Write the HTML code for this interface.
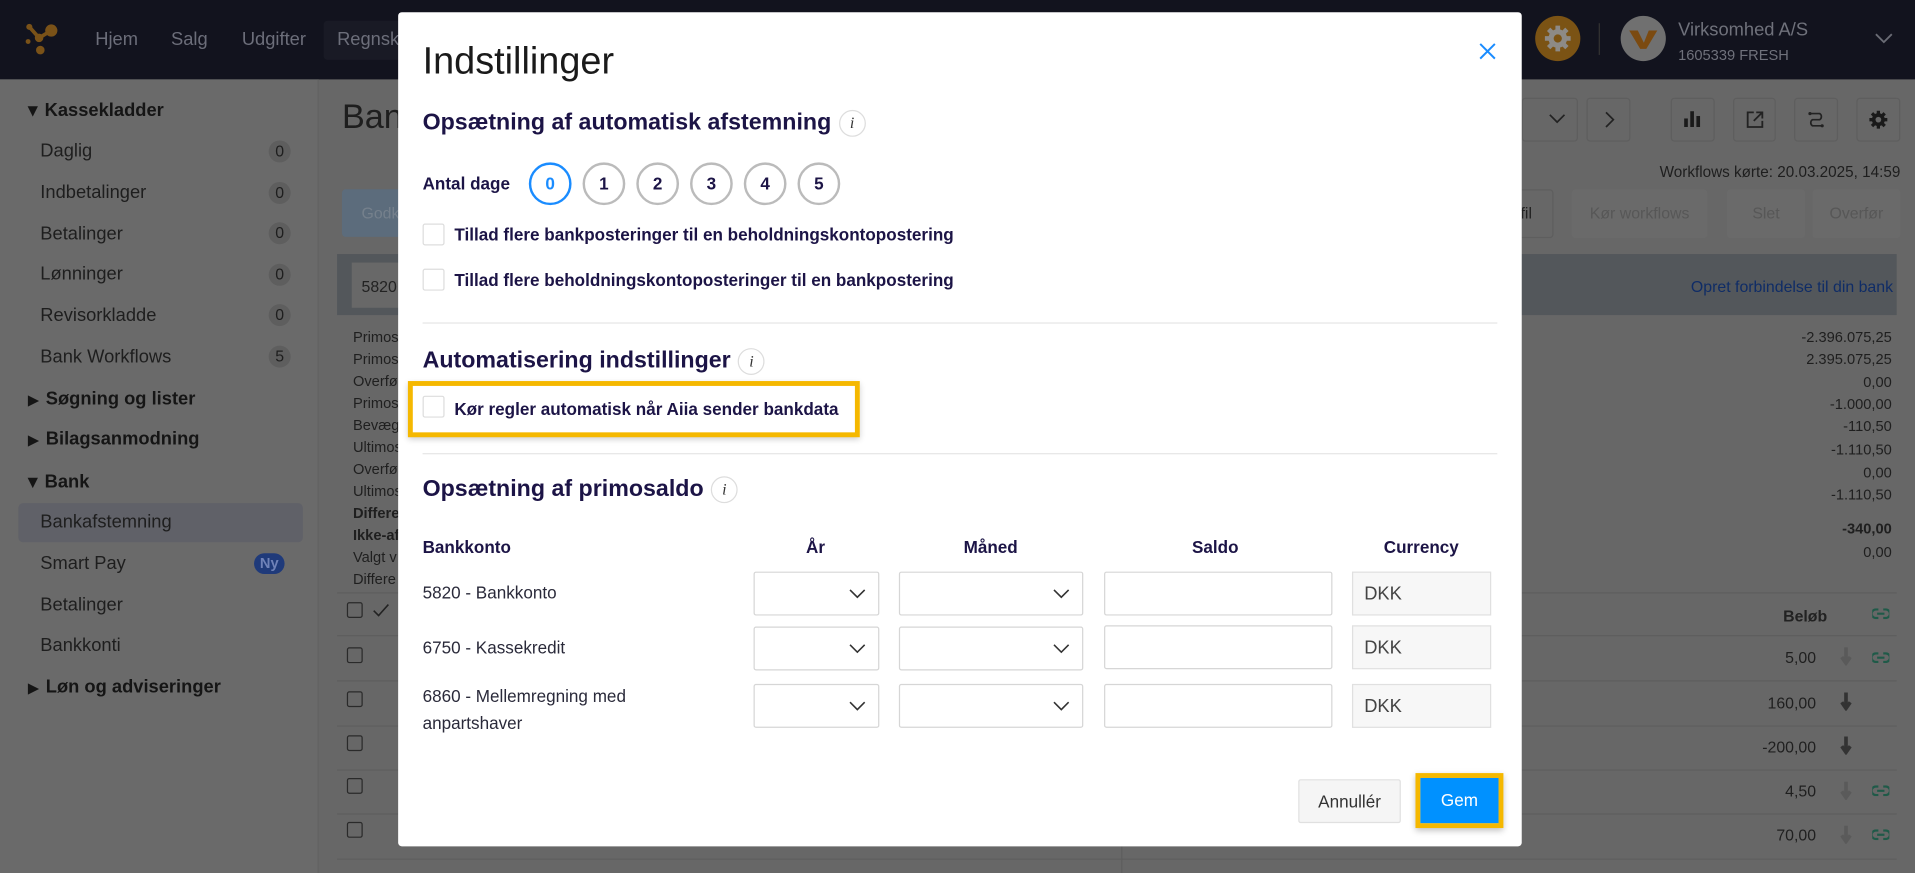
<!DOCTYPE html>
<html><head><meta charset="utf-8"><style>
*{box-sizing:border-box;margin:0;padding:0}
html,body{width:1915px;height:873px;overflow:hidden;background:#666}
#w{position:absolute;left:0;top:0;width:1568px;height:715px;transform:scale(1.22130);transform-origin:0 0;font-family:"Liberation Sans",Arial,sans-serif;background:#676767;overflow:hidden}
.abs{position:absolute}
.top{left:0;top:0;width:1568px;height:65px;background:#12131e}
.nav{color:#6c6e7a;font-size:15px;top:24px}
.side{left:0;top:65px;width:261px;height:650px;background:#6a6a6a;border-right:1px solid #626262}
.sh{font-size:15px;font-weight:bold;color:#151515;left:23px}
.si{font-size:15px;color:#1e1e1e;left:33px}
.bd{width:18px;height:18px;border-radius:9px;background:#5e5e5e;color:#1e1e1e;font-size:13px;text-align:center;line-height:18px;left:220px}
.tri{display:inline-block;margin-right:6px}
.num{right:19px;font-size:12px;color:#1f1f1f;text-align:right}
.lbl{left:289px;font-size:12px;color:#1f1f1f}
.cb{width:13px;height:13px;border:1.5px solid #2a2a2a;border-radius:2px;left:284px}
.row{left:276px;width:1277px;height:1px;background:#5e5e5e}
.modal{left:326px;top:10px;width:920px;height:683px;background:#fff;border-radius:3px}
.h{color:#1c1446;font-weight:bold;font-size:19px}
.ic{display:inline-block;width:22px;height:22px;border:1px solid #ddd;border-radius:11px;font-family:"Liberation Serif",serif;font-style:italic;font-size:13px;text-align:center;line-height:20px;color:#333;font-weight:normal;vertical-align:middle;margin-left:6px}
.circ{width:35px;height:35px;border:2px solid #bbb;border-radius:50%;text-align:center;line-height:31px;font-weight:bold;font-size:14px;color:#1c1446;top:123px}
.chk{width:18px;height:18px;border:1px solid #ddd;border-radius:2px}
.t{color:#1c1446;font-size:14px;font-weight:bold}
.hr{left:20px;width:880px;height:1px;background:#e6e6e6}
.sel{border:1px solid #d6d6d6;height:36px;border-radius:2px;background:#fff}
.sel svg{position:absolute;right:10px;top:13px}
.cur{border:1px solid #e0e0e0;background:#f7f7f7;height:36px;font-size:15px;color:#444;padding-left:9px;line-height:35px}
.acc{font-size:14px;color:#2a2a3a}
.ch{font-size:14px;font-weight:bold;color:#1c1446;top:430px}
.lk{left:1533px;width:14px;height:9px}
</style></head><body><div id="w">
<div class="abs top"></div>
<svg class="abs" style="left:20px;top:18px" width="30" height="30" viewBox="0 0 30 30"><g fill="#7a5218" stroke="#7a5218"><circle cx="4" cy="4" r="2.5" stroke="none"/><circle cx="22" cy="7" r="5" stroke="none"/><circle cx="12" cy="13" r="3.5" stroke="none"/><circle cx="3" cy="16" r="2" stroke="none"/><circle cx="13" cy="23" r="3.5" stroke="none"/><path d="M4 4L12 13L22 7" stroke-width="3" fill="none"/></g></svg>
<div class="abs nav" style="left:78px">Hjem</div>
<div class="abs nav" style="left:140px">Salg</div>
<div class="abs nav" style="left:198px">Udgifter</div>
<div class="abs" style="left:265px;top:17px;width:70px;height:32px;background:#191a25;border-radius:3px"></div>
<div class="abs nav" style="left:276px">Regnsk</div>
<div class="abs" style="left:1257px;top:13px;width:37px;height:37px;border-radius:50%;background:#7b5314"></div>
<svg class="abs" style="left:1264px;top:20px" width="23" height="23" viewBox="0 0 24 24"><circle cx="12" cy="12" r="8" fill="#8d8a86"/><g stroke="#8d8a86" stroke-width="4"><path d="M12 1v22M1 12h22M4.2 4.2l15.6 15.6M19.8 4.2L4.2 19.8"/></g><circle cx="12" cy="12" r="3.5" fill="#7b5314"/></svg>
<div class="abs" style="left:1309px;top:19px;width:1px;height:26px;background:#333"></div>
<div class="abs" style="left:1327px;top:13px;width:37px;height:37px;border-radius:50%;background:#707070"></div>
<svg class="abs" style="left:1333px;top:22px" width="25" height="20" viewBox="0 0 25 20"><path d="M1 3h7l5 10 4-10h7l-9 15h-5z" fill="#7b4a10"/></svg>
<div class="abs" style="left:1374px;top:16px;font-size:15px;color:#6f717b">Virksomhed A/S</div>
<div class="abs" style="left:1374px;top:38px;font-size:12px;color:#6f717b">1605339 FRESH</div>
<svg class="abs" style="left:1535px;top:27px" width="15" height="10"><path d="M1 1l6.5 6.5L14 1" stroke="#6a6c75" stroke-width="1.5" fill="none"/></svg>

<div class="abs side"></div>
<div class="abs sh" style="top:81px"><span class="tri">▾</span>Kassekladder</div>
<div class="abs si" style="top:115px">Daglig</div><div class="abs bd" style="top:115px">0</div>
<div class="abs si" style="top:149px">Indbetalinger</div><div class="abs bd" style="top:149px">0</div>
<div class="abs si" style="top:183px">Betalinger</div><div class="abs bd" style="top:182px">0</div>
<div class="abs si" style="top:216px">Lønninger</div><div class="abs bd" style="top:216px">0</div>
<div class="abs si" style="top:250px">Revisorkladde</div><div class="abs bd" style="top:249px">0</div>
<div class="abs si" style="top:284px">Bank Workflows</div><div class="abs bd" style="top:283px">5</div>
<div class="abs sh" style="top:318px"><span class="tri" style="font-size:11px">▶</span>Søgning og lister</div>
<div class="abs sh" style="top:351px"><span class="tri" style="font-size:11px">▶</span>Bilagsanmodning</div>
<div class="abs sh" style="top:385px"><span class="tri">▾</span>Bank</div>
<div class="abs" style="left:15px;top:412px;width:233px;height:32px;background:#606168;border-radius:4px"></div>
<div class="abs si" style="top:419px">Bankafstemning</div>
<div class="abs si" style="top:453px">Smart Pay</div>
<div class="abs" style="left:208px;top:453px;width:25px;height:17px;border-radius:9px;background:#1f3a7a;color:#6f82b8;font-size:12px;font-weight:bold;text-align:center;line-height:17px">Ny</div>
<div class="abs si" style="top:487px">Betalinger</div>
<div class="abs si" style="top:520px">Bankkonti</div>
<div class="abs sh" style="top:554px"><span class="tri" style="font-size:11px">▶</span>Løn og adviseringer</div>

<div class="abs" style="left:280px;top:80px;font-size:28px;color:#1e1e1e">Ban</div>
<div class="abs" style="left:280px;top:155px;width:60px;height:39px;background:#5c6c7c;border-radius:3px"></div>
<div class="abs" style="left:296px;top:167px;font-size:13px;color:#75808c">Godk</div>
<div class="abs" style="left:276px;top:208px;width:1277px;height:50px;background:#53575b"></div>
<div class="abs" style="left:288px;top:215px;width:60px;height:37px;background:#686868"></div>
<div class="abs" style="left:296px;top:227px;font-size:13px;color:#222">5820</div>
<div class="abs" style="right:18px;top:227px;font-size:13px;color:#0f2c66">Opret forbindelse til din bank</div>
<div class="abs" style="left:1246px;top:80px;width:46px;height:36px;border:1px solid #5e5e5e;border-radius:3px"></div>
<svg class="abs" style="left:1268px;top:93px" width="14" height="9"><path d="M1 1l6 6 6-6" stroke="#222" stroke-width="1.4" fill="none"/></svg>
<div class="abs" style="left:1299px;top:80px;width:36px;height:36px;border:1px solid #5e5e5e;border-radius:3px"></div>
<svg class="abs" style="left:1314px;top:91px" width="8" height="14"><path d="M1 1l6 6-6 6" stroke="#222" stroke-width="1.4" fill="none"/></svg>
<div class="abs" style="left:1368px;top:80px;width:36px;height:36px;border:1px solid #5e5e5e;border-radius:3px"></div>
<svg class="abs" style="left:1378px;top:91px" width="16" height="13"><rect x="1" y="6" width="3" height="7" fill="#1a1a1a"/><rect x="6" y="0" width="3" height="13" fill="#1a1a1a"/><rect x="11" y="4" width="3" height="9" fill="#1a1a1a"/></svg>
<div class="abs" style="left:1419px;top:80px;width:35px;height:36px;border:1px solid #5e5e5e;border-radius:3px"></div>
<svg class="abs" style="left:1430px;top:91px" width="14" height="14"><path d="M6 1H1v12h12V8M8 1h5v5M13 1L6 8" stroke="#222" stroke-width="1.5" fill="none"/></svg>
<div class="abs" style="left:1469px;top:80px;width:36px;height:36px;border:1px solid #5e5e5e;border-radius:3px"></div>
<svg class="abs" style="left:1480px;top:91px" width="14" height="14"><path d="M3 2h7a3 3 0 010 5H4a3 3 0 000 5h7" stroke="#222" stroke-width="1.4" fill="none"/><circle cx="2" cy="2" r="1.3" fill="#222"/><circle cx="12" cy="12" r="1.3" fill="#222"/></svg>
<div class="abs" style="left:1520px;top:80px;width:36px;height:36px;border:1px solid #5e5e5e;border-radius:3px"></div>
<svg class="abs" style="left:1530px;top:90px" width="16" height="16" viewBox="0 0 24 24"><circle cx="12" cy="12" r="8" fill="#1a1a1a"/><g stroke="#1a1a1a" stroke-width="4"><path d="M12 1v22M1 12h22M4.2 4.2l15.6 15.6M19.8 4.2L4.2 19.8"/></g><circle cx="12" cy="12" r="3.5" fill="#676767"/></svg>
<div class="abs" style="right:12px;top:134px;font-size:12.5px;color:#1e1e1e">Workflows kørte: 20.03.2025, 14:59</div>
<div class="abs" style="left:1240px;top:155px;width:32px;height:40px;border:1px solid #5e5e5e;border-radius:3px"></div>
<div class="abs" style="left:1245px;top:167px;font-size:13px;color:#222">fil</div>
<div class="abs" style="left:1287px;top:155px;width:111px;height:40px;background:#6a6a6a;border-radius:3px;text-align:center;line-height:40px;font-size:13px;color:#575757">Kør workflows</div>
<div class="abs" style="left:1414px;top:155px;width:64px;height:40px;background:#6a6a6a;border-radius:3px;text-align:center;line-height:40px;font-size:13px;color:#575757">Slet</div>
<div class="abs" style="left:1484px;top:155px;width:72px;height:40px;background:#6a6a6a;border-radius:3px;text-align:center;line-height:40px;font-size:13px;color:#575757">Overfør</div>

<div class="abs lbl" style="top:269px">Primos</div><div class="abs lbl" style="top:287px">Primos</div><div class="abs lbl" style="top:305px">Overfø</div><div class="abs lbl" style="top:323px">Primos</div><div class="abs lbl" style="top:341px">Bevæg</div><div class="abs lbl" style="top:359px">Ultimos</div><div class="abs lbl" style="top:377px">Overfø</div><div class="abs lbl" style="top:395px">Ultimos</div><div class="abs lbl" style="top:413px;font-weight:bold">Differe</div><div class="abs lbl" style="top:431px;font-weight:bold">Ikke-af</div><div class="abs lbl" style="top:449px">Valgt v</div><div class="abs lbl" style="top:467px">Differe</div>
<div class="abs num" style="top:269px">-2.396.075,25</div><div class="abs num" style="top:287px">2.395.075,25</div><div class="abs num" style="top:306px">0,00</div><div class="abs num" style="top:324px">-1.000,00</div><div class="abs num" style="top:342px">-110,50</div><div class="abs num" style="top:361px">-1.110,50</div><div class="abs num" style="top:380px">0,00</div><div class="abs num" style="top:398px">-1.110,50</div><div class="abs num" style="top:426px;font-weight:bold">-340,00</div><div class="abs num" style="top:445px">0,00</div>
<div class="row abs" style="top:485px"></div>
<div class="cb abs" style="top:493px"></div>
<svg class="abs" style="left:305px;top:494px" width="14" height="11"><path d="M1 6l4 4 8-9" stroke="#222" stroke-width="1.3" fill="none"/></svg>
<div class="abs" style="left:1460px;top:497px;font-size:13px;font-weight:bold;color:#222">Beløb</div>
<div class="row abs" style="top:520px"></div>
<div class="cb abs" style="top:530px"></div><div class="abs num" style="right:81px;top:531px;font-size:13px">5,00</div>
<div class="row abs" style="top:557px"></div>
<div class="cb abs" style="top:566px"></div><div class="abs num" style="right:81px;top:568px;font-size:13px">160,00</div>
<div class="row abs" style="top:594px"></div>
<div class="cb abs" style="top:602px"></div><div class="abs num" style="right:81px;top:604px;font-size:13px">-200,00</div>
<div class="row abs" style="top:630px"></div>
<div class="cb abs" style="top:637px"></div><div class="abs num" style="right:81px;top:640px;font-size:13px">4,50</div>
<div class="row abs" style="top:666px"></div>
<div class="cb abs" style="top:673px"></div><div class="abs num" style="right:81px;top:676px;font-size:13px">70,00</div>
<div class="row abs" style="top:703px"></div>
<svg class="abs lk" style="top:498px" viewBox="0 0 14 9"><path d="M5 1H3a3.5 3.5 0 000 7h2M9 1h2a3.5 3.5 0 010 7H9M4 4.5h6" stroke="#1f5a48" stroke-width="1.8" fill="none"/></svg>
<svg class="abs lk" style="top:534px" viewBox="0 0 14 9"><path d="M5 1H3a3.5 3.5 0 000 7h2M9 1h2a3.5 3.5 0 010 7H9M4 4.5h6" stroke="#1f5a48" stroke-width="1.8" fill="none"/></svg>
<svg class="abs lk" style="top:643px" viewBox="0 0 14 9"><path d="M5 1H3a3.5 3.5 0 000 7h2M9 1h2a3.5 3.5 0 010 7H9M4 4.5h6" stroke="#1f5a48" stroke-width="1.8" fill="none"/></svg>
<svg class="abs lk" style="top:679px" viewBox="0 0 14 9"><path d="M5 1H3a3.5 3.5 0 000 7h2M9 1h2a3.5 3.5 0 010 7H9M4 4.5h6" stroke="#1f5a48" stroke-width="1.8" fill="none"/></svg>
<svg class="abs" style="left:1507px;top:530px" width="9" height="15"><path d="M4.5 0v11M1 8l3.5 5 3.5-5" stroke="#5a5a5a" stroke-width="3" fill="none"/></svg>
<svg class="abs" style="left:1507px;top:567px" width="9" height="15"><path d="M4.5 0v11M1 8l3.5 5 3.5-5" stroke="#333" stroke-width="3" fill="none"/></svg>
<svg class="abs" style="left:1507px;top:603px" width="9" height="15"><path d="M4.5 0v11M1 8l3.5 5 3.5-5" stroke="#333" stroke-width="3" fill="none"/></svg>
<svg class="abs" style="left:1507px;top:640px" width="9" height="15"><path d="M4.5 0v11M1 8l3.5 5 3.5-5" stroke="#5a5a5a" stroke-width="3" fill="none"/></svg>
<svg class="abs" style="left:1507px;top:676px" width="9" height="15"><path d="M4.5 0v11M1 8l3.5 5 3.5-5" stroke="#5a5a5a" stroke-width="3" fill="none"/></svg>
<div class="abs" style="left:918px;top:693px;width:1px;height:22px;background:#5e5e5e"></div>

<div class="abs modal">
<div class="abs" style="left:20px;top:22px;font-size:31px;color:#1a1a1a">Indstillinger</div>
<svg class="abs" style="left:885px;top:25px" width="14" height="14"><path d="M1 1l12 12M13 1L1 13" stroke="#1a8cff" stroke-width="1.6"/></svg>
<div class="abs h" style="left:20px;top:80px">Opsætning af automatisk afstemning<span class="ic">i</span></div>
<div class="abs t" style="left:20px;top:132px">Antal dage</div>
<div class="abs circ" style="left:107px;border-color:#1a8cff;color:#1a8cff">0</div>
<div class="abs circ" style="left:151px">1</div>
<div class="abs circ" style="left:195px">2</div>
<div class="abs circ" style="left:239px">3</div>
<div class="abs circ" style="left:283px">4</div>
<div class="abs circ" style="left:327px">5</div>
<div class="abs chk" style="left:20px;top:173px"></div>
<div class="abs t" style="left:46px;top:174px">Tillad flere bankposteringer til en beholdningskontopostering</div>
<div class="abs chk" style="left:20px;top:210px"></div>
<div class="abs t" style="left:46px;top:211px">Tillad flere beholdningskontoposteringer til en bankpostering</div>
<div class="abs hr" style="top:254px"></div>
<div class="abs h" style="left:20px;top:275px">Automatisering indstillinger<span class="ic">i</span></div>
<div class="abs" style="left:8px;top:302px;width:370px;height:46px;border:4px solid #f5b800;box-shadow:0 2px 5px rgba(0,0,0,.2)"></div>
<div class="abs chk" style="left:20px;top:314px"></div>
<div class="abs t" style="left:46px;top:317px">Kør regler automatisk når Aiia sender bankdata</div>
<div class="abs hr" style="top:361px"></div>
<div class="abs h" style="left:20px;top:380px">Opsætning af primosaldo<span class="ic">i</span></div>
<div class="abs ch" style="left:20px">Bankkonto</div>
<div class="abs ch" style="left:334px">År</div>
<div class="abs ch" style="left:463px">Måned</div>
<div class="abs ch" style="left:650px">Saldo</div>
<div class="abs ch" style="left:807px">Currency</div>
<div class="abs acc" style="left:20px;top:467px">5820 - Bankkonto</div>
<div class="abs acc" style="left:20px;top:512px">6750 - Kassekredit</div>
<div class="abs acc" style="left:20px;top:549px;line-height:22px">6860 - Mellemregning med<br>anpartshaver</div>
<div class="abs sel" style="left:291px;top:458px;width:103px"><svg width="14" height="9"><path d="M1 1l6 6 6-6" stroke="#333" stroke-width="1.3" fill="none"/></svg></div>
<div class="abs sel" style="left:410px;top:458px;width:151px"><svg width="14" height="9"><path d="M1 1l6 6 6-6" stroke="#333" stroke-width="1.3" fill="none"/></svg></div>
<div class="abs sel" style="left:578px;top:458px;width:187px"></div>
<div class="abs cur" style="left:781px;top:458px;width:114px">DKK</div>
<div class="abs sel" style="left:291px;top:503px;width:103px"><svg width="14" height="9"><path d="M1 1l6 6 6-6" stroke="#333" stroke-width="1.3" fill="none"/></svg></div>
<div class="abs sel" style="left:410px;top:503px;width:151px"><svg width="14" height="9"><path d="M1 1l6 6 6-6" stroke="#333" stroke-width="1.3" fill="none"/></svg></div>
<div class="abs sel" style="left:578px;top:502px;width:187px"></div>
<div class="abs cur" style="left:781px;top:502px;width:114px">DKK</div>
<div class="abs sel" style="left:291px;top:550px;width:103px"><svg width="14" height="9"><path d="M1 1l6 6 6-6" stroke="#333" stroke-width="1.3" fill="none"/></svg></div>
<div class="abs sel" style="left:410px;top:550px;width:151px"><svg width="14" height="9"><path d="M1 1l6 6 6-6" stroke="#333" stroke-width="1.3" fill="none"/></svg></div>
<div class="abs sel" style="left:578px;top:550px;width:187px"></div>
<div class="abs cur" style="left:781px;top:550px;width:114px">DKK</div>
<div class="abs" style="left:737px;top:628px;width:84px;height:36px;border:1px solid #e0e0e0;background:#f5f5f5;border-radius:2px;text-align:center;line-height:34px;font-size:14px;color:#333">Annullér</div>
<div class="abs" style="left:833px;top:623px;width:72px;height:45px;border:4px solid #f5b800;box-shadow:0 2px 5px rgba(0,0,0,.25)"></div>
<div class="abs" style="left:837px;top:627px;width:64px;height:37px;background:#0091ff;text-align:center;line-height:37px;font-size:14px;color:#fff">Gem</div>
</div>
</div></body></html>
